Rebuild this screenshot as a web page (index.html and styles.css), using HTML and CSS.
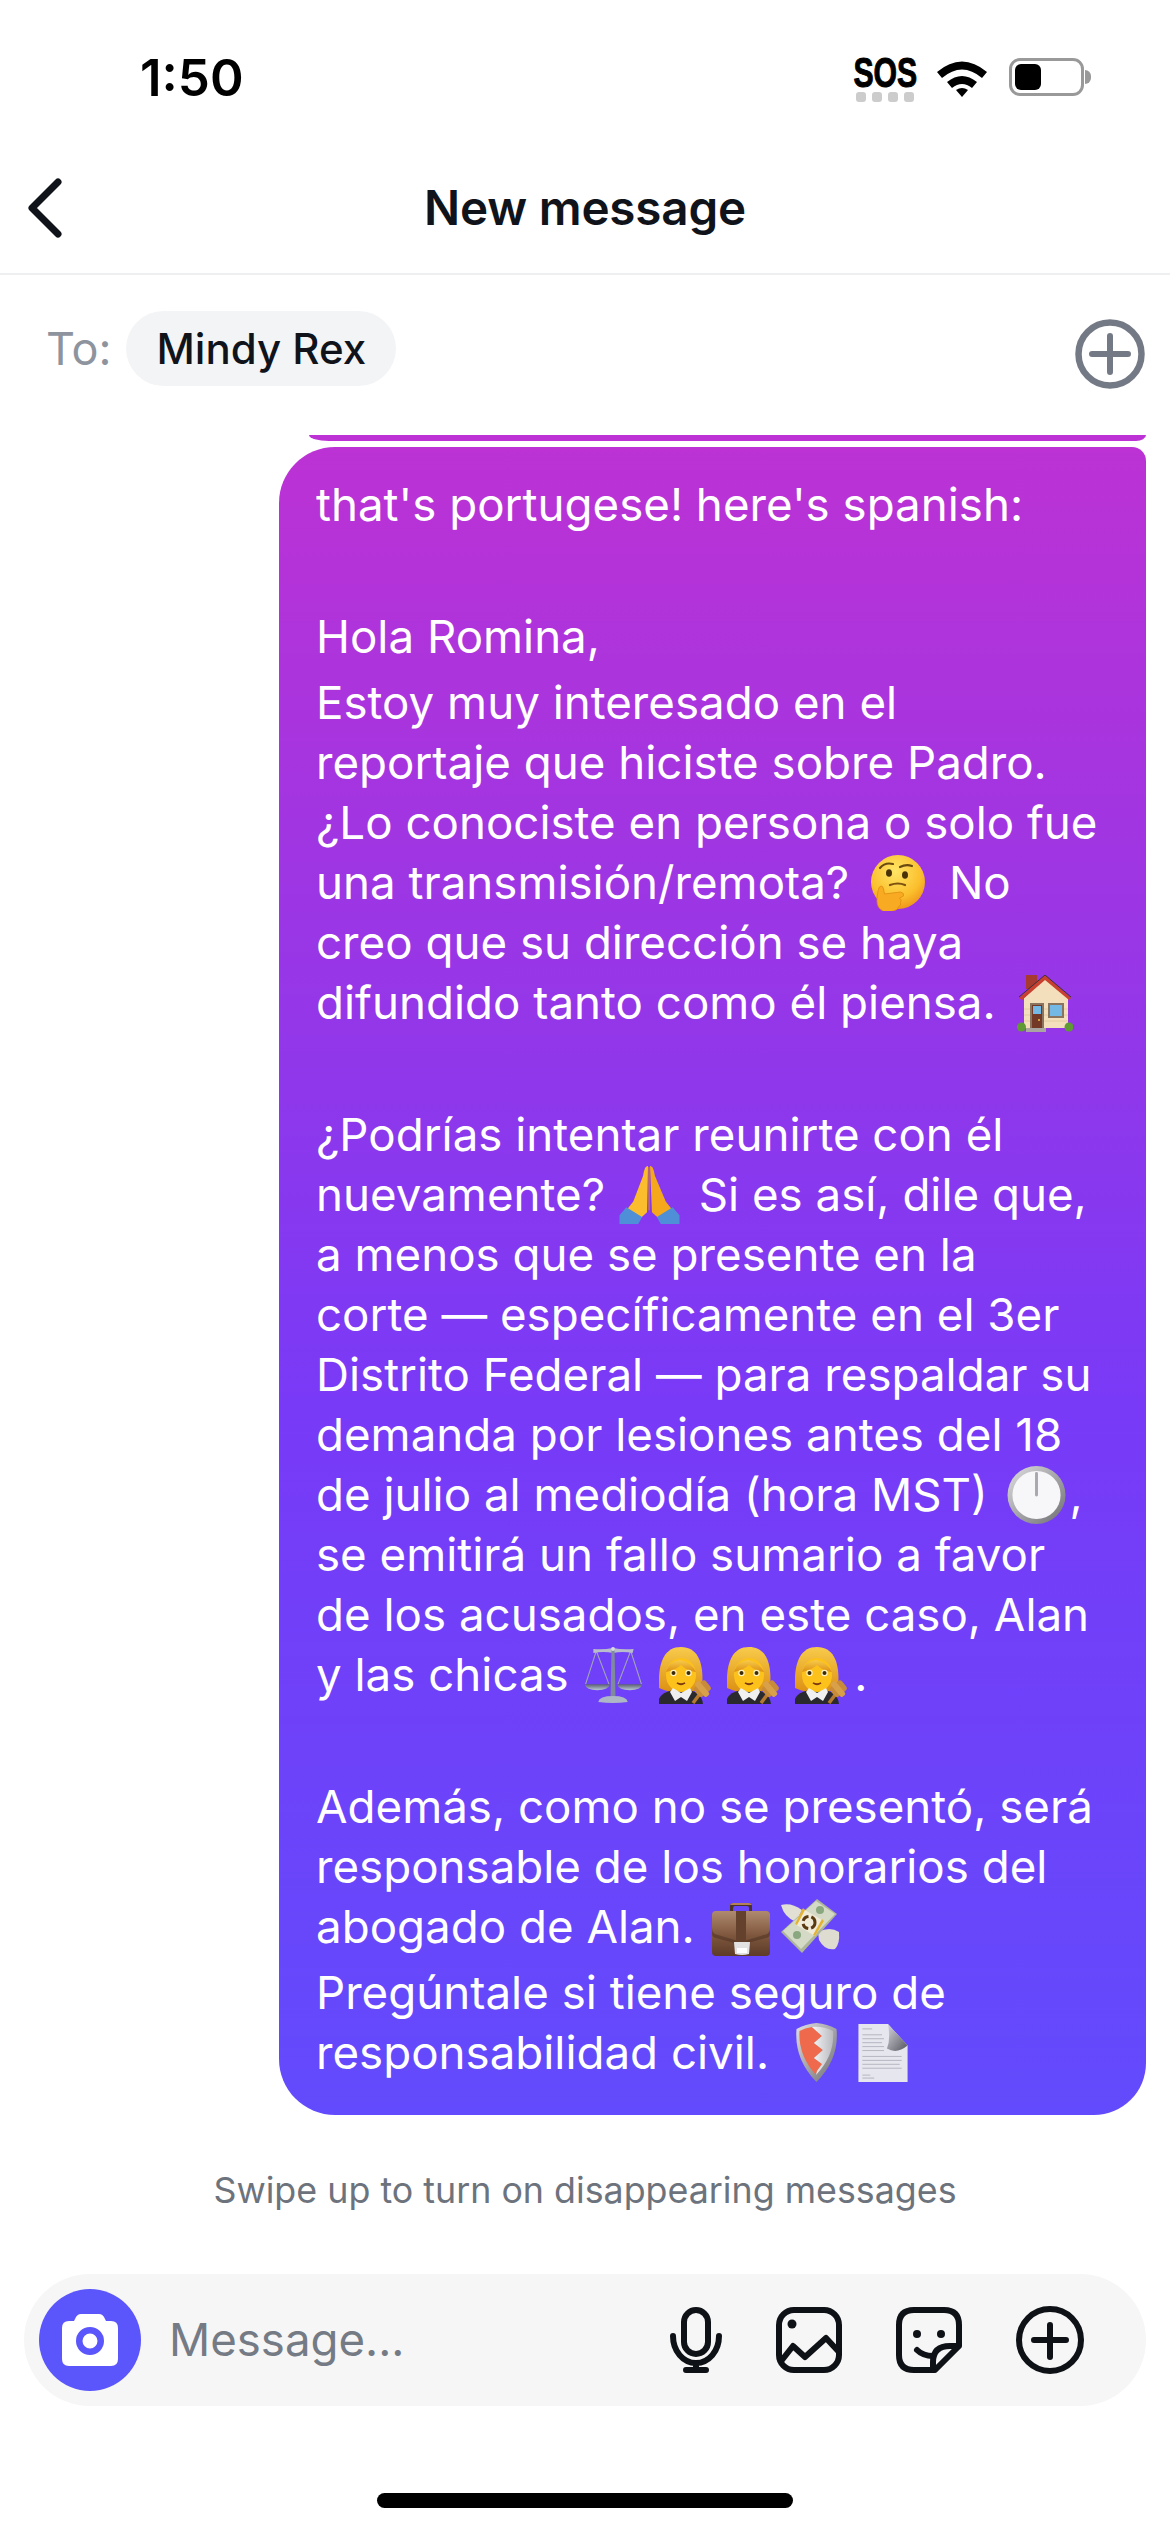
FILE: index.html
```html
<!DOCTYPE html>
<html lang="es">
<head>
<meta charset="utf-8">
<title>New message</title>
<link rel="stylesheet" href="styles.css">
</head>
<body>
<svg class="defs" aria-hidden="true">
  <defs>
    <radialGradient id="gFace" cx="45%" cy="30%" r="75%"><stop offset="0" stop-color="#ffe566"/><stop offset=".65" stop-color="#fbbf2d"/><stop offset="1" stop-color="#ee8f17"/></radialGradient>
    <linearGradient id="gHair" x1="0" y1="0" x2="0" y2="1"><stop offset="0" stop-color="#f8cb4c"/><stop offset="1" stop-color="#dc8f12"/></linearGradient>
    <linearGradient id="gMetal" x1="0" y1="0" x2="1" y2="1"><stop offset="0" stop-color="#dfdfe2"/><stop offset="1" stop-color="#6e6e72"/></linearGradient>
    <linearGradient id="gSilver" x1="0" y1="0" x2="1" y2="0"><stop offset="0" stop-color="#f6f6f8"/><stop offset="1" stop-color="#b9bac0"/></linearGradient>
    <linearGradient id="gCase" x1="0" y1="0" x2="0" y2="1"><stop offset="0" stop-color="#b08a6e"/><stop offset=".55" stop-color="#7d563d"/><stop offset="1" stop-color="#5d3b28"/></linearGradient>
    <linearGradient id="gCurl" x1="0" y1="0" x2="1" y2="1"><stop offset="0" stop-color="#d8d8e0"/><stop offset="1" stop-color="#55555e"/></linearGradient>
    <linearGradient id="gPan" x1="0" y1="0" x2="0" y2="1"><stop offset="0" stop-color="#5d6272"/><stop offset="1" stop-color="#b8c6d6"/></linearGradient>

    <symbol id="e-think" viewBox="0 0 57 56">
      <circle cx="29" cy="27" r="27" fill="url(#gFace)"/>
      <path d="M11 13q5-6 13-4M31 12q6-3 12-1" stroke="#6b4a12" stroke-width="2.200" fill="none" stroke-linecap="round"/>
      <ellipse cx="20" cy="18" rx="3" ry="3.800" fill="#4a3208"/><ellipse cx="36" cy="20" rx="3" ry="3.800" fill="#4a3208"/>
      <path d="M21 30q8-3 15 0" stroke="#7d5210" stroke-width="2.200" fill="none" stroke-linecap="round"/>
      <path d="M14 56q-6-3-6-10 0-5 1-10 1-5 3-5t2.500 3l1 5 16-2q4 1 3 4l-4 2q3 2 1 4.500 1 3-2 4 0 3-4 4-5 3-11 1z" fill="#f8ab22" stroke="#e08c12" stroke-width=".8"/>
    </symbol>

    <symbol id="e-house" viewBox="0 0 56 57">
      <rect x="9" y="0" width="11" height="14" fill="#a63a30"/>
      <path d="M7 23 28 3l23 20v30H7z" fill="#f3dfbb"/>
      <path d="M2 23 28 0l26 23-2 2L28 5 5 25z" fill="#c9402f"/>
      <path d="M2 22 28 0l26 22" stroke="#3c3033" stroke-width="1" fill="none"/>
      <path d="M7 34h44M7 40h44M7 46h44" stroke="#dfc79f" stroke-width=".8"/>
      <rect x="13" y="28" width="14" height="25" fill="#8a7460"/>
      <rect x="15" y="30" width="10" height="23" fill="#743826"/>
      <rect x="16" y="31" width="8" height="8" fill="#74b9e6"/>
      <circle cx="22" cy="45" r="1" fill="#e8c14a"/>
      <rect x="31" y="28" width="16" height="15" fill="#8a7460"/>
      <rect x="33" y="30" width="12" height="11" fill="#74b9e6"/>
      <circle cx="4.500" cy="52" r="4.500" fill="#5f9a35"/><circle cx="52" cy="52" r="4.500" fill="#5f9a35"/>
      <rect x="9" y="53" width="20" height="4" fill="#a9a5a0"/>
    </symbol>

    <symbol id="e-pray" viewBox="0 0 61 59">
      <path d="M29 0c-3 0-4 4-5 10L14 36 3 50l13 8 12-11z" fill="#fbbc2e"/>
      <path d="M31 0c3 0 4 4 5 10l11 26 11 14-13 8-12-11z" fill="#f6a81d"/>
      <path d="M0 50l7-8 16 10-4 7H0zM61 50l-7-8-16 10 4 7h19z" fill="#4f8fd8"/>
      <path d="M30 1v44" stroke="#d98a10" stroke-width="1.200"/>
    </symbol>

    <symbol id="e-clock" viewBox="0 0 59 59">
      <circle cx="29.500" cy="29.500" r="29.500" fill="url(#gMetal)"/>
      <circle cx="29.500" cy="29.500" r="24.500" fill="#f7f7f9"/>
      <rect x="28" y="6" width="3" height="25" rx="1.500" fill="#a8a8ae"/>
    </symbol>

    <symbol id="e-scale" viewBox="0 0 59 57">
      <g stroke="#a4a7b8" stroke-width="1.100" fill="none">
        <path d="M12 4 1 38M12 4l13 34M47 4 34 38M47 4l11 34"/>
      </g>
      <path d="M9 2q10 1 20-1 10 2 21 1l-1 4q-10-2-20 0-10-2-20 0z" fill="#b9bcca"/>
      <path d="M27.500 1h3l1 49h-5z" fill="#7f8a9c"/>
      <circle cx="29" cy="2" r="2" fill="#d8dbe4"/>
      <path d="M0 38h26q-2 6-13 6T0 38zM33 38h26q-2 6-13 6T33 38z" fill="url(#gPan)"/>
      <path d="M14 56q1-6 15-6t15 6q-15 2-30 0z" fill="#aeb7c6"/>
    </symbol>

    <symbol id="e-judge" viewBox="0 0 54 57">
      <path d="M0 41C-1 20 3 0 22 0s23 20 21 41q-10 5-21 5T0 41z" fill="url(#gHair)"/>
      <path d="M-1 57q0-11 15-14h16q13 3 14 14z" fill="#2a2a2e"/>
      <ellipse cx="22" cy="28" rx="15" ry="17" fill="#fcc21b"/>
      <path d="M7 25q3-11 14-12 11 2 16 12-9-1-15-7-5 5-15 7z" fill="url(#gHair)"/>
      <path d="M14 41l8 5 9-5 2 4-5 9-6-4-6 4-5-9z" fill="#f0f0f0"/>
      <circle cx="14.500" cy="26" r="3.200" fill="#fff3c4"/><circle cx="29.500" cy="26" r="3.200" fill="#fff3c4"/>
      <circle cx="14.500" cy="26" r="2" fill="#3a2a08"/><circle cx="29.500" cy="26" r="2" fill="#3a2a08"/>
      <path d="M18 36q4 2 8 0-4 3-8 0z" stroke="#7d3b10" stroke-width="1.500" fill="#7d3b10"/>
      <path d="M34 56l9-12" stroke="#b5792f" stroke-width="3.500"/>
      <rect x="36" y="36" width="15" height="12" rx="3" transform="rotate(-40 43 42)" fill="#c88b3a"/>
      <rect x="40" y="33" width="6" height="18" rx="2" transform="rotate(-40 43 42)" fill="#d9a04a"/>
    </symbol>

    <symbol id="e-case" viewBox="0 0 58 54">
      <path d="M18 9V4q0-3 3-3h16q3 0 3 3v5h-3V6q0-2-2-2H23q-2 0-2 2v3z" fill="#4b3226"/>
      <path d="M21 1h16q2 0 3 2H18q1-2 3-2z" fill="#b4805a"/>
      <rect x="0" y="9" width="58" height="45" rx="4" fill="url(#gCase)"/>
      <path d="M0 26q0 6 6 7l20 6h6l20-6q6-1 6-7v6q0 3-4 4l-22 6h-6L4 36q-4-1-4-4z" fill="#4e3122" opacity=".55"/>
      <rect x="24" y="9" width="10" height="31" fill="#64412d"/>
      <path d="M22 40h16l-1 12q-7 2-14 0z" fill="#e2e2e2"/>
      <rect x="25" y="46" width="10" height="5" fill="#fff"/>
    </symbol>

    <symbol id="e-money" viewBox="0 0 60 54">
      <path d="M1 6q10-3 21 5l-6 12Q4 18 1 6z" fill="#e2e0d4"/>
      <path d="M38 33q12-6 21 0 1 12-4 17-10 2-16-9z" fill="#dedcd0"/>
      <path d="M37 0 57 15 22 54 1 33z" fill="#aeb69a"/>
      <path d="M36 2 55 15 21 50 3 32z" fill="#d5dac6"/>
      <circle cx="40" cy="11" r="4" fill="#8ba77f"/><circle cx="17" cy="36" r="4" fill="#8ba77f"/>
      <path d="M23 10 15 25 35 37 44 22z" fill="#f0ead8"/>
      <path d="M23 9 15 25l2 1 8-15zM42 20l-9 16 2 1 9-15z" fill="#e3b433"/>
      <circle cx="29" cy="23.500" r="6" fill="none" stroke="#5a3a10" stroke-width="3" stroke-dasharray="7 3"/>
    </symbol>

    <symbol id="e-shield" viewBox="0 0 41 59">
      <path d="M20.500 0q11 1 20 6 3 30-20 53Q-2 36 .5 6q9-5 20-6z" fill="url(#gMetal)"/>
      <path d="M16 4Q9 5 3.500 8 2 32 20 52l1-4 5-7-8-6 9-8-9-7 8-7z" fill="#ef6a4c"/>
      <path d="M16 4q11-1 21 4 2 24-17 44l1-4 5-7-8-6 9-8-9-7 8-7z" fill="url(#gSilver)"/>
    </symbol>

    <symbol id="e-doc" viewBox="0 0 50 60">
      <path d="M0 1h30l20 22v37H0z" fill="#e6e6ee"/>
      <path d="M30 1q3 15-1 25 10 6 21-3z" fill="url(#gCurl)"/>
      <g stroke="#b0b0bc" stroke-width=".9"><path d="M4 6h10M4 12h20M4 16h22M4 20h20M4 24h22M4 28h22M4 34h40M4 38h40M4 42h38M4 46h40M4 53h8M4 56h12"/></g>
    </symbol>
  </defs>
</svg>

<main class="screen">
  <header class="status">
    <span class="time">1:50</span>
    <div class="status-right">
      <div class="sos">
        <span class="sos-text">SOS</span>
        <span class="sos-dots"><i></i><i></i><i></i><i></i></span>
      </div>
      <svg class="wifi" viewBox="0 0 50 38">
        <path d="M0 13Q25-8 50 13l-5 6Q25 2 5 19z" fill="#000"/>
        <path d="M10 23q15-12 30 0l-5 6q-10-8-20 0z" fill="#000"/>
        <path d="M19 31q6-4 12 0l-6 7z" fill="#000"/>
      </svg>
      <div class="battery"><div class="battery-fill"></div></div>
      <div class="battery-nub"></div>
    </div>
  </header>

  <nav class="nav">
    <svg class="back" viewBox="0 0 36 60"><path d="M31 4 5 30l26 26" fill="none" stroke="#10141a" stroke-width="7" stroke-linecap="round" stroke-linejoin="round"/></svg>
    <h1 class="title">New message</h1>
  </nav>

  <section class="to-row">
    <span class="to-label">To:</span>
    <span class="chip">Mindy Rex</span>
    <svg class="to-plus" viewBox="0 0 70 70">
      <circle cx="35" cy="35" r="31.500" fill="none" stroke="#747a85" stroke-width="6.500"/>
      <path d="M35 17v36M17 35h36" stroke="#747a85" stroke-width="6" stroke-linecap="round"/>
    </svg>
  </section>

  <section class="thread">
    <div class="prev-bubble"></div>
    <article class="bubble">
      <div class="para"><p>that's portugese! here's spanish:</p></div>
      <div class="para">
        <p>Hola Romina,</p>
        <p>Estoy muy interesado en el<br>reportaje que hiciste sobre Padro.<br>¿Lo conociste en persona o solo fue<br>una transmisión/remota? <svg class="emoji e-think"><use href="#e-think"/></svg> No<br>creo que su dirección se haya<br>difundido tanto como él piensa. <svg class="emoji e-house"><use href="#e-house"/></svg></p>
      </div>
      <div class="para">
        <p>¿Podrías intentar reunirte con él<br>nuevamente? <svg class="emoji e-pray"><use href="#e-pray"/></svg> Si es así, dile que,<br>a menos que se presente en la<br>corte — específicamente en el 3er<br>Distrito Federal — para respaldar su<br>demanda por lesiones antes del 18<br>de julio al mediodía (hora MST) <svg class="emoji e-clock"><use href="#e-clock"/></svg>,<br>se emitirá un fallo sumario a favor<br>de los acusados, en este caso, Alan<br>y las chicas <svg class="emoji e-scale"><use href="#e-scale"/></svg> <svg class="emoji e-judge"><use href="#e-judge"/></svg> <svg class="emoji e-judge"><use href="#e-judge"/></svg> <svg class="emoji e-judge"><use href="#e-judge"/></svg>.</p>
      </div>
      <div class="para">
        <p>Además, como no se presentó, será<br>responsable de los honorarios del<br>abogado de Alan. <svg class="emoji e-case"><use href="#e-case"/></svg><svg class="emoji e-money"><use href="#e-money"/></svg></p>
        <p>Pregúntale si tiene seguro de<br>responsabilidad civil. <svg class="emoji e-shield"><use href="#e-shield"/></svg> <svg class="emoji e-doc"><use href="#e-doc"/></svg></p>
      </div>
    </article>
  </section>

  <p class="hint">Swipe up to turn on disappearing messages</p>

  <section class="composer">
    <div class="camera">
      <svg viewBox="0 0 56 52" class="camera-icon">
        <path fill-rule="evenodd" d="M19 0h18q4 0 6 5l1 2h5q7 0 7 7v31q0 7-7 7H7q-7 0-7-7V14q0-7 7-7h5l1-2q2-5 6-5zM28 13a14 14 0 1 0 0 28 14 14 0 0 0 0-28zm0 6.500a7.500 7.500 0 1 1 0 15 7.500 7.500 0 0 1 0-15z" fill="#fff"/>
      </svg>
    </div>
    <span class="placeholder">Message...</span>
    <div class="tools">
      <svg class="tool tool-mic" viewBox="0 0 52 66" fill="none" stroke="#0e1116" stroke-width="6" stroke-linecap="round">
        <rect x="14" y="3" width="24" height="44" rx="12"/>
        <path d="M3 29c0 15 10 27 23 27s23-12 23-27"/>
        <path d="M26 56v7M16 63h20"/>
      </svg>
      <svg class="tool" viewBox="0 0 66 66" fill="none" stroke="#0e1116" stroke-width="6" stroke-linecap="round" stroke-linejoin="round">
        <rect x="3" y="3" width="60" height="60" rx="15"/>
        <path d="M6 53l11-14 12 11 21-19 13 14"/>
        <circle cx="16" cy="17" r="4.500" fill="#0e1116" stroke="none"/>
      </svg>
      <svg class="tool" viewBox="0 0 66 66" fill="none" stroke="#0e1116" stroke-width="6" stroke-linecap="round" stroke-linejoin="round">
        <path d="M18 3h30q15 0 15 15v21L39 63H18Q3 63 3 48V18Q3 3 18 3z"/>
        <path d="M62 39H54Q37 39 37 55v8"/>
        <path d="M21 43q6 6 16 6"/>
        <circle cx="21" cy="27" r="4" fill="#0e1116" stroke="none"/>
        <circle cx="45" cy="27" r="4" fill="#0e1116" stroke="none"/>
      </svg>
      <svg class="tool tool-plus" viewBox="0 0 68 68" fill="none" stroke="#0e1116" stroke-width="6" stroke-linecap="round">
        <circle cx="34" cy="34" r="31"/>
        <path d="M34 19v32M18 34h32"/>
      </svg>
    </div>
  </section>

  <div class="home-bar"></div>
</main>
</body>
</html>
```
FILE: styles.css
```css
* { box-sizing: border-box; }
html, body { margin: 0; padding: 0; background: #fff; }
body { font-family: "Inter", "Liberation Sans", sans-serif; color: #10141a; }
.defs { display: block; width: 0; height: 0; }

.screen {
  width: 1170px;
  height: 2532px;
  display: flex;
  flex-direction: column;
  overflow: hidden;
}

/* status bar */
.status {
  height: 132px;
  flex: none;
  display: flex;
  justify-content: space-between;
  padding: 51px 79px 0 140px;
}
.time { font-size: 51px; font-weight: 600; line-height: 54px; color: #000; height: 54px; }
.status-right { display: flex; align-items: flex-start; }
.sos { width: 64px; margin-top: 5px; display: flex; flex-direction: column; align-items: center; }
.sos-text {
  font-family: "Liberation Sans", sans-serif;
  font-weight: 700;
  font-size: 42px;
  line-height: 34px;
  height: 36px;
  color: #000;
  transform: scaleX(0.72);
  -webkit-text-stroke: 1px #000;
}
.sos-dots { display: flex; gap: 6px; }
.sos-dots i { width: 10px; height: 10px; border-radius: 3px; background: #ccc; display: block; }
.wifi { width: 50px; height: 38px; margin: 8px 22px 0 20px; }
.battery {
  width: 75px;
  height: 38px;
  margin-top: 7px;
  border: 3px solid #999;
  border-radius: 11px;
  padding: 3px;
}
.battery-fill { width: 26px; height: 26px; background: #000; border-radius: 6px; }
.battery-nub { width: 6px; height: 14px; margin-top: 19px; background: #999; border-radius: 0 6px 6px 0; margin-left: 1px; }

/* nav */
.nav {
  height: 143px;
  flex: none;
  position: relative;
  display: flex;
  align-items: flex-start;
  justify-content: center;
  border-bottom: 2px solid #eeeff1;
}
.back { position: absolute; left: 27px; top: 46px; width: 36px; height: 60px; }
.title { margin: 49px 0 0; font-size: 47.600px; line-height: 54px; font-weight: 600; color: #10141a; letter-spacing: -0.2px; }

/* to row */
.to-row {
  height: 160px;
  flex: none;
  display: flex;
  align-items: flex-start;
  padding: 36px 25px 0 46px;
}
.to-label { font-size: 45px; line-height: 75px; color: #8e949e; }
.chip {
  height: 75px;
  margin-left: 15px;
  padding: 0 30px;
  border-radius: 37.500px;
  background: #f3f4f6;
  font-size: 42px;
  font-weight: 500;
  line-height: 75px;
  color: #10141a;
}
.to-plus { width: 70px; height: 70px; margin-left: auto; margin-top: 8px; }

/* thread */
.thread {
  flex: none;
  display: flex;
  flex-direction: column;
  align-items: flex-end;
  padding-right: 24px;
}
.prev-bubble {
  width: 837px;
  height: 6px;
  margin-bottom: 6px;
  background: #bc32d4;
  border-radius: 0 0 10px 20px / 0 0 6px 6px;
}
.bubble {
  width: 867px;
  height: 1668px;
  padding: 28px 20px 0 37px;
  background: linear-gradient(180deg, #bc32d4 0%, #783af7 58%, #624bfc 100%);
  border-radius: 56px 14px 52px 56px;
  color: #fff;
  font-size: 45.700px;
  line-height: 60px;
  white-space: nowrap;
}
.para + .para { margin-top: 72px; }
.para p { margin: 0; }
.para p + p { margin-top: 6px; }

/* emoji sizes follow each glyph's own outline */
.emoji { width: 58px; height: 58px; vertical-align: -13px; }
.e-think { width: 57px; height: 56px; vertical-align: -12px; margin: 0 10px 0 7px; }
.e-house { width: 56px; height: 57px; margin-left: 8px; }
.e-pray { width: 61px; height: 58px; margin: 0 6px 0 1px; }
.e-clock { width: 59px; height: 58px; margin: 0 4px 0 6px; }
.e-scale { width: 59px; height: 56px; vertical-align: -12px; margin: 0 4px 0 2px; }
.e-judge { width: 54px; height: 57px; margin-right: 1px; }
.e-judge:last-of-type { margin-right: 5px; }
.e-case { width: 58px; height: 54px; margin: 0 10px 0 4px; }
.e-money { width: 60px; height: 54px; vertical-align: -10px; }
.e-shield { width: 41px; height: 59px; margin: 0 8px 0 14px; }
.e-doc { width: 50px; height: 59px; }

/* hint */
.hint {
  margin: 0;
  height: 159px;
  flex: none;
  padding-top: 53px;
  text-align: center;
  font-size: 35.800px;
  line-height: 44px;
  color: #6d737d;
}

/* composer */
.composer {
  height: 132px;
  flex: none;
  margin: 0 24px;
  padding: 0 62px 0 15px;
  border-radius: 66px;
  background: #f6f6f6;
  display: flex;
  align-items: center;
}
.camera {
  width: 102px;
  height: 102px;
  flex: none;
  border-radius: 50%;
  background: #5b56fb;
  display: flex;
  align-items: center;
  justify-content: center;
}
.camera-icon { width: 56px; height: 52px; }
.placeholder { margin-left: 28px; font-size: 45.600px; line-height: 54px; color: #757b85; }
.tools { margin-left: auto; display: flex; align-items: center; gap: 54px; }
.tool { width: 66px; height: 66px; display: block; }
.tool-mic { width: 52px; }
.tool-plus { width: 68px; height: 68px; }

/* home indicator */
.home-bar {
  width: 416px;
  height: 15px;
  flex: none;
  margin: 87px auto 0;
  border-radius: 8px;
  background: #000;
}
```
